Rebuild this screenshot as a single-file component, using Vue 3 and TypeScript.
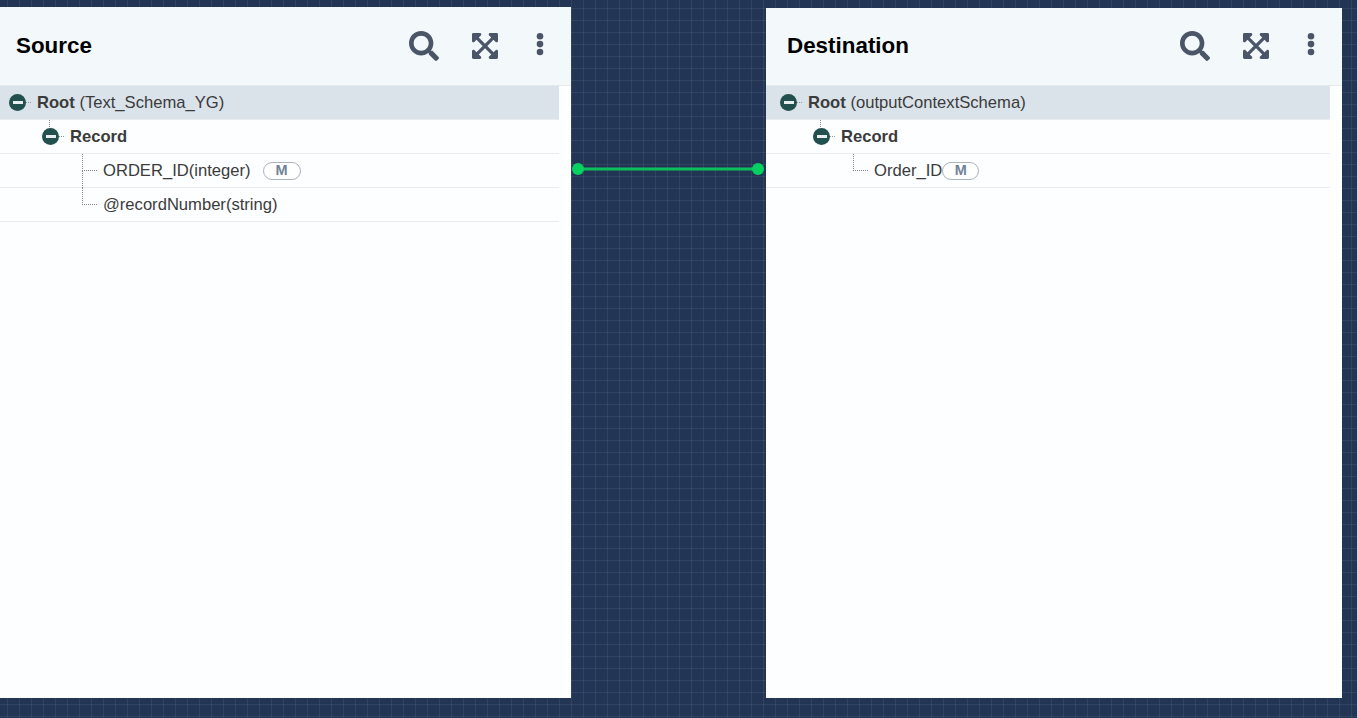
<template>
  <div class="canvas">
    <section v-for="panel in panels" :key="panel.title" class="panel" :class="panel.cls">
      <header class="panel-head">
        <h2>{{ panel.title }}</h2>
        <div class="actions">
          <svg class="icon-search" viewBox="0 0 512 512">
            <path d="M505 442.7L405.3 343c-4.5-4.5-10.6-7-17-7H372c27.6-35.3 44-79.7 44-128C416 93.1 322.9 0 208 0S0 93.1 0 208s93.1 208 208 208c48.3 0 92.7-16.4 128-44v16.3c0 6.4 2.5 12.5 7 17l99.7 99.7c9.4 9.4 24.6 9.4 33.9 0l28.3-28.3c9.4-9.4 9.4-24.6.1-34zM208 336c-70.7 0-128-57.2-128-128 0-70.7 57.2-128 128-128 70.7 0 128 57.2 128 128 0 70.7-57.2 128-128 128z" />
          </svg>
          <svg class="icon-expand" viewBox="0 32 448 448">
            <path d="M448 344v112a23.94 23.94 0 0 1-24 24H312c-21.39 0-32.09-25.9-17-41l36.2-36.2L224 295.6 116.77 402.9 153 439c15.09 15.1 4.39 41-17 41H24a23.94 23.94 0 0 1-24-24V344c0-21.4 25.89-32.1 41-17l36.19 36.2L184.46 256 77.18 148.7 41 185c-15.1 15.1-41 4.4-41-17V56a23.94 23.94 0 0 1 24-24h112c21.39 0 32.09 25.9 17 41l-36.2 36.2L224 216.4l107.23-107.3L295 73c-15.09-15.1-4.39-41 17-41h112a23.94 23.94 0 0 1 24 24v112c0 21.4-25.89 32.1-41 17l-36.19-36.2L263.54 256l107.28 107.3L407 327.1c15.1-15.2 41-4.5 41 16.9z" />
          </svg>
          <svg class="icon-more" viewBox="0 0 8 25">
            <circle cx="4" cy="4.2" r="3.3" />
            <circle cx="4" cy="12.1" r="3.3" />
            <circle cx="4" cy="20" r="3.3" />
          </svg>
        </div>
      </header>
      <ul class="tree">
        <li class="row root">
          <span class="toggle"></span>
          <span class="label"><b>Root</b> ({{ panel.schema }})</span>
        </li>
        <li class="row record">
          <span class="toggle"></span>
          <span class="label"><b>Record</b></span>
        </li>
        <li
          v-for="(leaf, i) in panel.leaves"
          :key="leaf.name"
          class="row leaf"
          :class="{ 'has-next': i < panel.leaves.length - 1 }"
        >
          <span class="label">{{ leaf.name }}</span>
          <span v-if="leaf.mapped" class="badge" :class="{ tight: panel.tight }">M</span>
        </li>
      </ul>
    </section>
    <svg class="link" width="200" height="16" viewBox="0 0 200 16">
      <line x1="6" y1="8" x2="186" y2="8" />
      <circle cx="6" cy="8" r="6" />
      <circle cx="186" cy="8" r="6" />
    </svg>
  </div>
</template>

<script setup lang="ts">
interface Leaf {
  name: string
  mapped: boolean
}

interface Panel {
  title: string
  schema: string
  cls: string
  tight: boolean
  leaves: Leaf[]
}

const panels: Panel[] = [
  {
    title: 'Source',
    schema: 'Text_Schema_YG',
    cls: 'source',
    tight: false,
    leaves: [
      { name: 'ORDER_ID(integer)', mapped: true },
      { name: '@recordNumber(string)', mapped: false },
    ],
  },
  {
    title: 'Destination',
    schema: 'outputContextSchema',
    cls: 'destination',
    tight: true,
    leaves: [{ name: 'Order_ID', mapped: true }],
  },
]
</script>

<style scoped>
.canvas {
  position: relative;
  display: flex;
  gap: 195px;
  width: 1357px;
  height: 718px;
  overflow: hidden;
  box-sizing: border-box;
  padding-bottom: 20px;
  background-color: #223554;
  background-image:
    linear-gradient(to right, rgba(255, 255, 255, 0.07) 1px, transparent 1px),
    linear-gradient(to bottom, rgba(255, 255, 255, 0.07) 1px, transparent 1px);
  background-size: 12px 12px;
  background-position: 7px 8px;
  font-family: 'Liberation Sans', Arial, sans-serif;
}

.panel {
  flex: 0 0 576px;
  background: #fdfeff;
  box-sizing: border-box;
  padding-right: 12px;
}

.source {
  margin-left: -5px;
  margin-top: 7px;
}

.destination {
  margin-top: 8px;
}

.panel-head {
  display: flex;
  align-items: center;
  justify-content: space-between;
  margin-right: -12px;
  height: 78px;
  box-sizing: border-box;
  padding: 0 27px 2px 21px;
  background: #f3f8fa;
  border-bottom: 1px solid #e6e9ec;
}

.source .panel-head {
  height: 79px;
  padding-bottom: 1px;
}

.panel-head h2 {
  margin: 0;
  font-size: 22.4px;
  font-weight: 700;
  color: #000;
}

.actions {
  display: flex;
  align-items: center;
}

.actions svg {
  fill: #4a5567;
  display: block;
}

.icon-search {
  width: 30px;
  height: 30px;
}

.icon-expand {
  width: 26px;
  height: 26px;
  margin-left: 33px;
}

.icon-more {
  width: 8px;
  height: 25px;
  margin-left: 38px;
  margin-top: -3px;
}

.tree {
  list-style: none;
  margin: 0;
  padding: 0;
}

.row {
  position: relative;
  display: flex;
  align-items: center;
  height: 34px;
  box-sizing: border-box;
  font-size: 16.6px;
  color: #3b3b3b;
  border-bottom: 1px solid #e9ecef;
}

.label b {
  font-weight: 700;
}

.root {
  background: #dae2ea;
  padding-left: 14px;
}

.record {
  padding-left: 47px;
}

.leaf {
  padding-left: 108px;
}

.toggle {
  position: relative;
  flex: none;
  width: 17px;
  height: 17px;
  margin-right: 11px;
  border-radius: 50%;
  background: #22504f;
}

.toggle::before {
  content: '';
  position: absolute;
  left: 3.5px;
  top: 7px;
  width: 10px;
  height: 3px;
  background: #e8eef0;
}

.toggle::after {
  content: '';
  position: absolute;
  left: 17px;
  top: 8px;
  width: 5px;
  border-top: 1px dotted #999;
}

.record::before {
  content: '';
  position: absolute;
  left: 54px;
  top: 0;
  height: 7px;
  border-left: 1px dotted #888;
}

.leaf::before {
  content: '';
  position: absolute;
  left: 87px;
  top: 0;
  width: 14px;
  height: 16px;
  border-left: 1px dotted #888;
  border-bottom: 1px dotted #888;
}

.has-next::after {
  content: '';
  position: absolute;
  left: 87px;
  top: 16px;
  bottom: -1px;
  border-left: 1px dotted #888;
}

.badge {
  flex: none;
  box-sizing: border-box;
  width: 38px;
  height: 18px;
  margin-left: 12px;
  line-height: 14px;
  text-align: center;
  font-size: 14.5px;
  font-weight: 700;
  color: #71839a;
  border: 1px solid #a9b3bd;
  border-radius: 9px;
  background: #fff;
}

.badge.tight {
  width: 37px;
  margin-left: 0;
}

.link {
  position: absolute;
  left: 572px;
  top: 161px;
}

.link line {
  stroke: #0dbf5c;
  stroke-width: 3;
}

.link circle {
  fill: #04d160;
}
</style>

<style>
html,
body {
  margin: 0;
  background: #223554;
}
</style>
